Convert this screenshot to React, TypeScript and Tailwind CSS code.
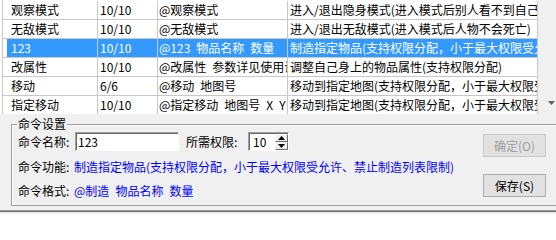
import React from "react";

const rows: string[][] = [
  ["观察模式", "10/10", "@观察模式", "进入/退出隐身模式(进入模式后别人看不到自己的角色)"],
  ["无敌模式", "10/10", "@无敌模式", "进入/退出无敌模式(进入模式后人物不会死亡)"],
  ["123", "10/10", "@123\u2002物品名称\u2002数量", "制造指定物品(支持权限分配，小于最大权限受允许、禁止制造列表限制)"],
  ["改属性", "10/10", "@改属性\u2002参数详见使用说明", "调整自己身上的物品属性(支持权限分配)"],
  ["移动", "6/6", "@移动\u2002地图号", "移动到指定地图(支持权限分配，小于最大权限受允许)"],
  ["指定移动", "10/10", "@指定移动\u2002地图号\u2002X\u2002Y", "移动到指定地图(支持权限分配，小于最大权限受允许)"],
];

function Row({ cells, selected }: { cells: string[]; selected: boolean }) {
  const sel = selected ? "bg-[#3399ff] text-white" : "text-black";
  return (
    <div className="flex h-[19px] shrink-0">
      <div className="w-[4px] shrink-0 border-b border-[#c8c8c8]" />
      <div className={`flex flex-1 border-b border-[#c8c8c8] ${sel}`}>
        <div className="w-[91px] shrink-0 overflow-hidden whitespace-pre border-r border-[#c8c8c8] pl-[4px] leading-[18px]">
          {cells[0]}
        </div>
        <div className="w-[60px] shrink-0 overflow-hidden whitespace-pre border-r border-[#c8c8c8] pl-[2px] leading-[18px]">
          {cells[1]}
        </div>
        <div className="w-[130px] shrink-0 overflow-hidden whitespace-pre border-r border-[#c8c8c8] pl-[1px] leading-[18px]">
          {cells[2]}
        </div>
        <div className="w-[250px] shrink-0 overflow-hidden whitespace-pre border-r border-[#c8c8c8] pl-[2px] leading-[18px]">
          {cells[3]}
        </div>
      </div>
    </div>
  );
}

function Triangle({ up }: { up: boolean }) {
  return (
    <svg width="7" height="4" viewBox="0 0 7 4" className="block">
      {up ? <polygon points="3.5,0 7,4 0,4" fill="#000" /> : <polygon points="0,0 7,0 3.5,4" fill="#000" />}
    </svg>
  );
}

export default function App() {
  return (
    <div className="w-[556px] h-[214px] overflow-hidden bg-[#f0f0f0] flex flex-col font-['Noto_Sans_CJK_SC',sans-serif] text-[12px]">
      {/* list view */}
      <div className="flex h-[114px] shrink-0 overflow-hidden">
        <div className="w-[538px] shrink-0 bg-white pl-[2px] overflow-hidden">
          <div className="flex flex-col border-l border-[#c8c8c8] pt-[1px] h-full">
            {rows.map((r, i) => (
              <Row key={i} cells={r} selected={i === 2} />
            ))}
          </div>
        </div>
        <div className="flex-1 bg-[#f0f0f0] flex flex-col justify-end items-end pr-[1px] pb-[9px]">
          <svg width="7" height="4" viewBox="0 0 7 4" className="block">
            <polygon points="0,0 7,0 3.5,4" fill="#606060" />
          </svg>
        </div>
      </div>

      {/* group box */}
      <div className="relative ml-[11px] mt-[10px] w-[560px] h-[82px] shrink-0 border border-[#a0a0a0] shadow-[inset_1px_1px_0_#ffffff]">
        <span className="absolute left-[5px] top-[-8px] bg-[#f0f0f0] px-[1px] leading-[14px] text-black">命令设置</span>
        <div className="flex pt-[7px] pl-[6px]">
          <div className="w-[465px] shrink-0 flex flex-col gap-[8px]">
            <div className="flex items-center h-[19px]">
              <span className="w-[57px] shrink-0 leading-[16px] text-black">命令名称:</span>
              <div className="w-[104px] h-[19px] shrink-0 bg-white border border-t-[#a0a0a0] border-l-[#a0a0a0] border-b-white border-r-white shadow-[inset_1px_1px_0_#696969] pl-[2px] leading-[17px] text-black">
                123
              </div>
              <span className="ml-[7px] w-[62px] shrink-0 leading-[16px] text-black">所需权限:</span>
              <div className="w-[41px] h-[19px] shrink-0 flex bg-white border border-t-[#a0a0a0] border-l-[#a0a0a0] border-b-white border-r-white shadow-[inset_1px_1px_0_#696969]">
                <span className="flex-1 pl-[4px] pt-[1px] leading-[16px] text-black">10</span>
                <div className="w-[13px] flex flex-col pt-[1px]">
                  <div className="flex-1 flex items-center justify-center bg-[#f0f0f0] border border-t-white border-l-white border-b-[#696969] border-r-[#696969]">
                    <Triangle up={true} />
                  </div>
                  <div className="flex-1 flex items-center justify-center bg-[#f0f0f0] border border-t-white border-l-white border-b-[#696969] border-r-[#696969]">
                    <Triangle up={false} />
                  </div>
                </div>
              </div>
            </div>
            <div className="flex h-[16px] items-center whitespace-pre">
              <span className="w-[56px] shrink-0 leading-[16px] text-black">命令功能:</span>
              <span className="leading-[16px] text-[#0000ff]">制造指定物品(支持权限分配，小于最大权限受允许、禁止制造列表限制)</span>
            </div>
            <div className="flex h-[16px] items-center whitespace-pre">
              <span className="w-[56px] shrink-0 leading-[16px] text-black">命令格式:</span>
              <span className="leading-[16px] text-[#0000ff]">@制造{"\u2002"}物品名称{"\u2002"}数量</span>
            </div>
          </div>
          <div className="flex flex-col gap-[17px] mt-[2px]">
            <div className="w-[63px] h-[23px] border border-[#c8c8c8] bg-[#e1e1e1] text-center leading-[21px] text-[#a0a0a0]">
              确定(O)
            </div>
            <div className="w-[63px] h-[23px] border border-[#adadad] bg-[#e1e1e1] text-center leading-[21px] text-black">
              保存(S)
            </div>
          </div>
        </div>
      </div>

      <div className="mt-[4px] h-[1px] shrink-0 bg-[#a0a0a0]" />
      <div className="h-[1px] shrink-0 bg-[#696969]" />
      <div className="flex-1 bg-[#f0f0f0]" />
    </div>
  );
}
